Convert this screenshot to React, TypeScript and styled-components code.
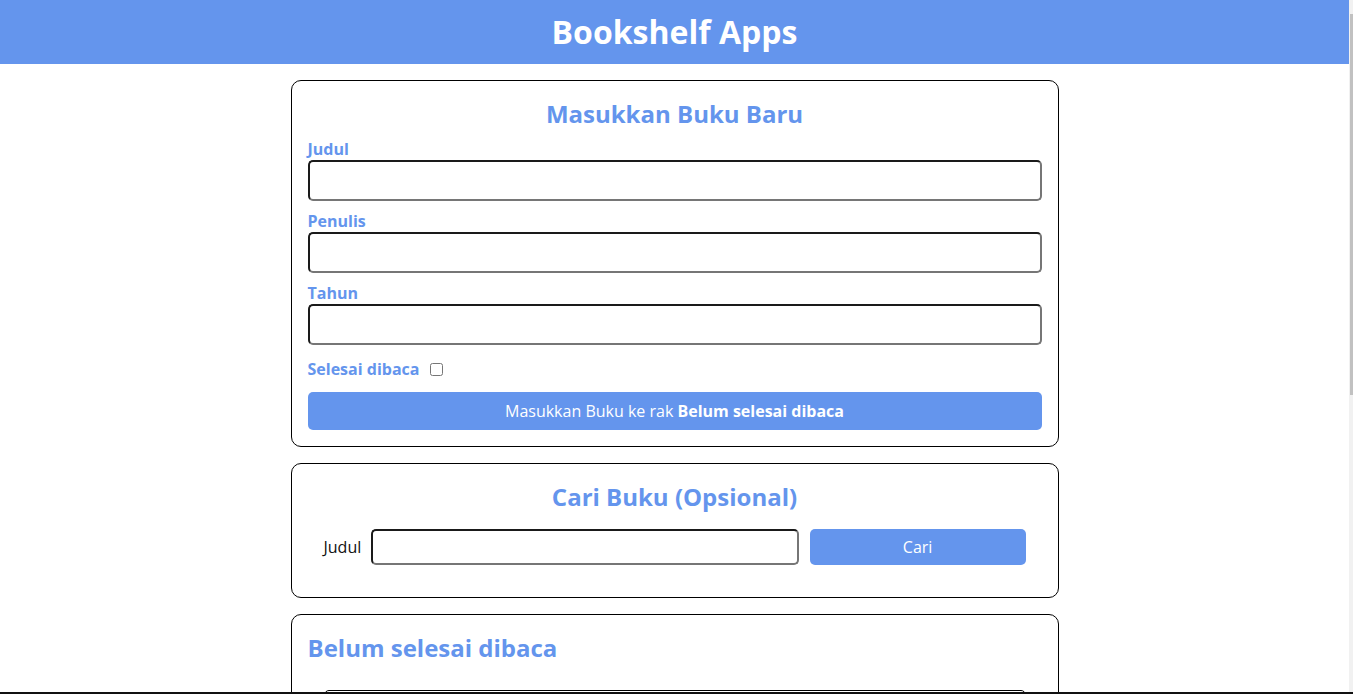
import styled, { createGlobalStyle } from "styled-components";

const BLUE = "#6495ed";

const GlobalStyle = createGlobalStyle`
    html, body {
        margin: 0;
        padding: 0;
        overflow: hidden;
        background: #ffffff;
    }

    * {
        box-sizing: border-box;
        font-family: "Open Sans", "Noto Sans", sans-serif;
    }
`;

const SCREEN = styled.div`
    height: 100vh;
    display: grid;
    grid-template-columns: 1fr 4px;
    grid-template-rows: 1fr 2px;
`;

const PAGE = styled.div`
    overflow: hidden;
    min-width: 0;
`;

const SCROLLTRACK = styled.div`
    background: #f1f1f1;
    padding: 14px 0 0 1px;
`;

const SCROLLTHUMB = styled.div`
    width: 3px;
    height: 381px;
    background: #c1c1c1;
`;

const BOTTOMBAR = styled.div`
    grid-column: 1 / -1;
    background: #111111;
`;

const HEADER = styled.header`
    background-color: ${BLUE};
    padding: 10px;
    text-align: center;

    & h1 {
        margin: 0;
        font-size: 32px;
        line-height: 44px;
        font-weight: 700;
        color: #ffffff;
    }
`;

const MAIN = styled.main`
    width: 768px;
    margin: 16px auto 0;
    display: flex;
    flex-direction: column;
    gap: 16px;
`;

const CARD = styled.section`
    border: 1px solid #000000;
    border-radius: 10px;
    padding: 16px;
`;

const TITLE = styled.h2<{ $align?: string }>`
    margin: 0;
    font-size: 24px;
    line-height: 33px;
    font-weight: 700;
    color: ${BLUE};
    text-align: ${(props) => props.$align || "center"};
`;

const FORM = styled.form`
    display: flex;
    flex-direction: column;
    margin-top: 8px;
`;

const FIELD = styled.div`
    display: flex;
    flex-direction: column;
    margin-bottom: 9px;
`;

const LABEL = styled.label`
    font-size: 16px;
    line-height: 22px;
    font-weight: 700;
    color: ${BLUE};
`;

const INPUT = styled.input<{ $height: number }>`
    width: 100%;
    height: ${(props) => props.$height}px;
    border-width: 2px;
    border-style: solid;
    border-color: #1a1a1a #767676 #767676 #1a1a1a;
    border-radius: 5px;
    padding: 0 8px;
    font-size: 16px;
    background: #ffffff;
    outline: none;
`;

const CHECKROW = styled.div`
    display: flex;
    align-items: center;
    gap: 11px;
    margin: 4px 0 12px;

    & input {
        margin: 0;
        width: 13px;
        height: 13px;
    }
`;

const BUTTON = styled.button<{ $height: number }>`
    height: ${(props) => props.$height}px;
    border: none;
    border-radius: 5px;
    background-color: ${BLUE};
    color: #ffffff;
    font-size: 16px;
    cursor: pointer;

    & b {
        font-weight: 700;
    }
`;

const SEARCHFORM = styled.form`
    display: flex;
    align-items: center;
    gap: 10px;
    padding: 16px;

    & label {
        font-size: 16px;
        color: #111111;
    }

    & input {
        flex: 2 1 0;
        min-width: 0;
    }

    & button {
        flex: 1 1 0;
        margin-left: 1px;
    }
`;

const SHELF = styled.div`
    padding: 26px 16px 16px;
`;

const BOOK = styled.article`
    border: 1px solid #000000;
    border-radius: 5px;
    height: 160px;
`;

const App = () => {
    return (
        <>
            <GlobalStyle />
            <SCREEN>
                <PAGE>
                    <HEADER>
                        <h1>Bookshelf Apps</h1>
                    </HEADER>
                    <MAIN>
                        <CARD>
                            <TITLE>Masukkan Buku Baru</TITLE>
                            <FORM onSubmit={(e) => e.preventDefault()}>
                                <FIELD>
                                    <LABEL htmlFor="inputBookTitle">Judul</LABEL>
                                    <INPUT id="inputBookTitle" type="text" $height={41} />
                                </FIELD>
                                <FIELD>
                                    <LABEL htmlFor="inputBookAuthor">Penulis</LABEL>
                                    <INPUT id="inputBookAuthor" type="text" $height={41} />
                                </FIELD>
                                <FIELD>
                                    <LABEL htmlFor="inputBookYear">Tahun</LABEL>
                                    <INPUT id="inputBookYear" type="number" $height={41} />
                                </FIELD>
                                <CHECKROW>
                                    <LABEL htmlFor="inputBookIsComplete">Selesai dibaca</LABEL>
                                    <input id="inputBookIsComplete" type="checkbox" />
                                </CHECKROW>
                                <BUTTON type="submit" $height={38}>
                                    Masukkan Buku ke rak <b>Belum selesai dibaca</b>
                                </BUTTON>
                            </FORM>
                        </CARD>

                        <CARD>
                            <TITLE>Cari Buku (Opsional)</TITLE>
                            <SEARCHFORM onSubmit={(e) => e.preventDefault()}>
                                <label htmlFor="searchBookTitle">Judul</label>
                                <INPUT id="searchBookTitle" type="text" $height={36} />
                                <BUTTON type="submit" $height={36}>Cari</BUTTON>
                            </SEARCHFORM>
                        </CARD>

                        <CARD>
                            <TITLE $align="left">Belum selesai dibaca</TITLE>
                            <SHELF>
                                <BOOK />
                            </SHELF>
                        </CARD>
                    </MAIN>
                </PAGE>
                <SCROLLTRACK>
                    <SCROLLTHUMB />
                </SCROLLTRACK>
                <BOTTOMBAR />
            </SCREEN>
        </>
    );
};

export default App;
